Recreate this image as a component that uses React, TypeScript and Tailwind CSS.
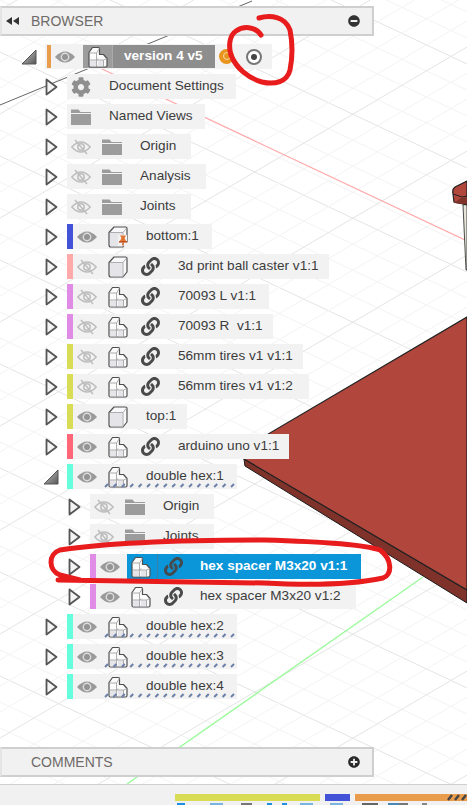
import { FaCog, FaLink, FaMinusCircle, FaPlusCircle } from "react-icons/fa";

type RowData = {
  label: string;
  width: string;
  depth?: 1 | 2;
  bar?: string;
  eye?: "on" | "off";
  icon: "gear" | "folder" | "body" | "bodies" | "pinned";
  link?: boolean;
  open?: boolean;
  selected?: boolean;
  wavy?: boolean;
};

const rows: RowData[] = [
  { label: "Document Settings", width: "w-[169px]", icon: "gear" },
  { label: "Named Views", width: "w-[138px]", icon: "folder" },
  { label: "Origin", width: "w-[124px]", eye: "off", icon: "folder" },
  { label: "Analysis", width: "w-[139px]", eye: "off", icon: "folder" },
  { label: "Joints", width: "w-[124px]", eye: "off", icon: "folder" },
  { label: "bottom:1", width: "w-[145px]", bar: "bg-[#4353d8]", eye: "on", icon: "pinned" },
  { label: "3d print ball caster v1:1", width: "w-[262px]", bar: "bg-[#ffaaaa]", eye: "off", icon: "body", link: true },
  { label: "70093 L v1:1", width: "w-[202px]", bar: "bg-[#e08be6]", eye: "off", icon: "bodies", link: true },
  { label: "70093 R  v1:1", width: "w-[206px]", bar: "bg-[#e08be6]", eye: "off", icon: "bodies", link: true },
  { label: "56mm tires v1 v1:1", width: "w-[236px]", bar: "bg-[#d9dc55]", eye: "off", icon: "bodies", link: true },
  { label: "56mm tires v1 v1:2", width: "w-[242px]", bar: "bg-[#d9dc55]", eye: "off", icon: "bodies", link: true },
  { label: "top:1", width: "w-[120px]", bar: "bg-[#d9dc55]", eye: "on", icon: "body" },
  { label: "arduino uno v1:1", width: "w-[222px]", bar: "bg-[#ff6678]", eye: "on", icon: "bodies", link: true },
  { label: "double hex:1", width: "w-[170px]", bar: "bg-[#66ffdd]", eye: "on", icon: "bodies", open: true, wavy: true },
  { label: "Origin", width: "w-[124px]", depth: 2, eye: "off", icon: "folder" },
  { label: "Joints", width: "w-[124px]", depth: 2, eye: "off", icon: "folder" },
  { label: "hex spacer M3x20 v1:1", width: "w-[271px]", depth: 2, bar: "bg-[#e08be6]", eye: "on", icon: "bodies", link: true, selected: true },
  { label: "hex spacer M3x20 v1:2", width: "w-[266px]", depth: 2, bar: "bg-[#e08be6]", eye: "on", icon: "bodies", link: true },
  { label: "double hex:2", width: "w-[170px]", bar: "bg-[#66ffdd]", eye: "on", icon: "bodies", wavy: true },
  { label: "double hex:3", width: "w-[170px]", bar: "bg-[#66ffdd]", eye: "on", icon: "bodies", wavy: true },
  { label: "double hex:4", width: "w-[170px]", bar: "bg-[#66ffdd]", eye: "on", icon: "bodies", wavy: true },
];

const toolbarBits = [
  { cls: "ml-[17px] w-[8px] bg-[#1f8fe0]" },
  { cls: "ml-[25px] w-[13px] bg-[#7ab5e0]" },
  { cls: "ml-[18px] w-[11px] bg-[#777777]" },
  { cls: "ml-[15px] w-[5px] bg-[#1f8fe0]" },
  { cls: "ml-[10px] w-[5px] bg-[#1f8fe0]" },
  { cls: "ml-[13px] w-[13px] bg-[#7ab5e0]" },
  { cls: "ml-[17px] w-[13px] bg-[#7ab5e0]" },
  { cls: "ml-[19px] w-[16px] bg-[#666666]" },
  { cls: "ml-[10px] w-[11px] bg-[#4a88b8]" },
  { cls: "w-[9px] bg-[#777777]" },
  { cls: "ml-[14px] w-[5px] bg-[#888888]" },
];

function Viewport() {
  const descending = Array.from({ length: 40 }, (_, i) => i * 26 - 260);
  const rising = Array.from({ length: 50 }, (_, i) => i * 26 + 10);
  return (
    <svg className="absolute inset-0" width="467" height="805" viewBox="0 0 467 805">
      {descending.map((c, i) => (
        <line key={c} x1="0" y1={c} x2="467" y2={c + 220} stroke={i % 4 === 0 ? "#e4e4e4" : "#f3f3f3"} strokeWidth="1" />
      ))}
      {rising.map((c, i) => (
        <line key={c} x1="0" y1={c} x2="467" y2={c - 275} stroke={i % 4 === 0 ? "#e4e4e4" : "#f3f3f3"} strokeWidth="1" />
      ))}
      <line x1="0" y1="105" x2="252" y2="1" stroke="#666666" strokeWidth="1" />
      <line x1="100" y1="68" x2="467" y2="241" stroke="#ffaaaa" strokeWidth="1.2" />
      <line x1="127" y1="784" x2="423" y2="577" stroke="#9cfb9c" strokeWidth="1.4" />
      {/* red plate */}
      <polygon points="244,459 245,466 467,603 467,590" fill="#7e322a" stroke="#1a1a1a" strokeWidth="1" />
      <polygon points="236,453 467,317 467,590 244,459" fill="#b0463c" stroke="#222222" strokeWidth="1.2" />
      {/* far plate and its leg */}
      <polygon points="463,205 467,204 467,270 466,270" fill="#e4e4d8" stroke="#222222" strokeWidth="0.8" />
      <path d="M467 181 L455 187 Q452 189 453 194 L454 202 L467 205 Z" fill="#b0463c" stroke="#222222" strokeWidth="1.2" />
      <path d="M453 194 L462 197 L467 196" fill="none" stroke="#222222" strokeWidth="1" />
      <polygon points="454,203 461,198 467,197 467,204 462,204" fill="#7e322a" />
    </svg>
  );
}

function Annotations() {
  return (
    <svg className="pointer-events-none absolute inset-0" width="467" height="805" viewBox="0 0 467 805">
      <g fill="none" stroke="#e81c1c" strokeWidth="5" strokeLinecap="round">
        <path d="M259 18 C270 15 285 16 290 30 C293 45 292 60 290 70 C287 82 275 85 262 82 C248 78 236 68 231 55 C228 45 230 35 236 31 C243 26 255 26 261 35" />
        <path d="M58 580 C100 581 180 582 264 583 C300 585 350 585 383 578 C392 575 393 560 380 550 C360 543 300 541 264 540 C200 540 120 541 60 550 C48 554 48 570 60 575 L80 580" />
      </g>
    </svg>
  );
}

function Collapsed() {
  return (
    <svg width="13" height="18" viewBox="0 0 13 18">
      <path d="M1.5 1.5 L11.5 9 L1.5 16.5 Z" fill="#f4f4f4" stroke="#555555" strokeWidth="1.8" strokeLinejoin="round" />
    </svg>
  );
}

function Expanded() {
  return (
    <svg width="16" height="16" viewBox="0 0 16 16">
      <defs>
        <linearGradient id="tri" x1="0" y1="0" x2="1" y2="1">
          <stop offset="0" stopColor="#cccccc" />
          <stop offset="1" stopColor="#555555" />
        </linearGradient>
      </defs>
      <path d="M1 15 L15 1 V15 Z" fill="url(#tri)" stroke="#555555" strokeWidth="1" strokeLinejoin="round" />
    </svg>
  );
}

function Eye({ off }: { off?: boolean }) {
  if (off) {
    return (
      <svg width="20" height="16" viewBox="0 0 20 16">
        <g fill="none" stroke="#bdbdbd" strokeWidth="1.5">
          <path d="M0.8 8 Q10 -2 19.2 8 Q10 18 0.8 8 Z" />
          <circle cx="10" cy="8" r="3.2" />
          <line x1="4" y1="1" x2="16" y2="15" />
        </g>
      </svg>
    );
  }
  return (
    <svg width="20" height="14" viewBox="0 0 20 14">
      <path d="M0 7 Q10 -4 20 7 Q10 18 0 7 Z" fill="#9a9a9a" />
      <circle cx="10" cy="7" r="4.4" fill="#dddddd" />
      <circle cx="10" cy="7" r="3" fill="#949494" />
    </svg>
  );
}

function Folder() {
  return (
    <svg width="20" height="16" viewBox="0 0 20 16">
      <path d="M0 0.5 H7.5 L9.5 3 H20 V4 H0 Z" fill="#9c9c9c" />
      <rect x="0" y="5" width="20" height="11" fill="#9c9c9c" />
    </svg>
  );
}

function Bodies() {
  return (
    <svg width="20" height="22" viewBox="0 0 20 22">
      <path d="M1 19.5 V6.5 L4.5 1.5 H10.5 Q11.5 1.5 11.5 2.5 V8.5 H15.5 L19 12.5 V19.5 Q19 21 17.5 21 H2.5 Q1 21 1 19.5 Z" fill="#fbfbfc" stroke="#505050" strokeWidth="1.2" strokeLinejoin="round" />
      <path d="M2 14.5 H8.5 V20.3 H2 Z M10 14.5 H15.5 V20.3 H10 Z" fill="#e6e6ea" />
      <path d="M1.5 7 H8.5 L11.5 2.5 M8.5 7 V21 M1.5 14 H8.5 M10 12.5 L9 14 H15.5 L19 12.5 M15.5 14 V21" fill="none" stroke="#9a9a9a" strokeWidth="0.8" />
    </svg>
  );
}

function Body({ pin }: { pin?: boolean }) {
  return (
    <svg width="20" height="22" viewBox="0 0 20 22">
      <path d="M1 19 V6.5 L6 1 H17.5 Q19 1 19 2.5 V16 L15 21 H3 Q1 21 1 19 Z" fill="#f8f8fa" stroke="#505050" strokeWidth="1.2" strokeLinejoin="round" />
      <path d="M2 7 H14.5 V20.3 H3 Q2 20.3 2 19 Z" fill="#e4e4e9" />
      <path d="M1.5 6.5 H15 L19 1.5 M15 6.5 V21" fill="none" stroke="#9a9a9a" strokeWidth="0.8" />
      {pin && (
        <g>
          <rect x="10" y="9" width="9" height="11" fill="#f2f2f2" />
          <path d="M12 9.5 H18 L16.5 12 L18 15 H12 L13.5 12 Z" fill="#e2732c" />
          <rect x="11" y="15" width="8" height="1.6" fill="#c4501c" />
          <rect x="14.3" y="16.5" width="1.4" height="3" fill="#c4501c" />
        </g>
      )}
    </svg>
  );
}

function Wavy() {
  const dashes = Array.from({ length: 16 }, (_, i) => i * 8.4 + 1);
  return (
    <svg className="absolute bottom-[1px] right-0" width="133" height="6" viewBox="0 0 133 6">
      {dashes.map((x) => (
        <line key={x} x1={x} y1="5" x2={x + 3} y2="2" stroke="#6b7fa8" strokeWidth="2" />
      ))}
    </svg>
  );
}

function TreeRow({ row }: { row: RowData }) {
  const { depth = 1, selected } = row;
  const sideClass =
    depth === 2 ? "w-[90px] pl-[68px]" : row.open ? "w-[67px] pl-[43px]" : "w-[67px] pl-[45px]";

  const glyph =
    row.icon === "gear" ? (
      <FaCog className="text-[#8f8f8f]" size={20} />
    ) : row.icon === "folder" ? (
      <Folder />
    ) : row.icon === "body" ? (
      <Body />
    ) : row.icon === "pinned" ? (
      <Body pin />
    ) : (
      <Bodies />
    );

  return (
    <div className="flex h-[25px] items-center">
      <div className={`flex h-full items-center ${sideClass}`}>{row.open ? <Expanded /> : <Collapsed />}</div>
      <div className={`relative flex h-full items-center bg-[#f2f2f2] ${row.width}`}>
        {row.bar && <div className={`h-full w-[6px] shrink-0 ${row.bar}`} />}
        {row.eye && (
          <div className="flex w-[24px] shrink-0 justify-end">
            <Eye off={row.eye === "off"} />
          </div>
        )}
        <div
          className={
            selected
              ? "ml-[7px] flex h-full flex-1 items-center bg-[#0a96d8] pl-[4px] text-white"
              : row.eye
                ? "ml-[7px] flex h-full flex-1 items-center pl-[4px] text-[#3c3c3c]"
                : "flex h-full flex-1 items-center pl-[4px] text-[#3c3c3c]"
          }
        >
          <div className="flex w-[20px] shrink-0 justify-center">{glyph}</div>
          {row.link && (
            <div
              className={
                selected
                  ? "ml-[6px] flex h-full w-[26px] shrink-0 items-center justify-end border-l border-[#3a7fa8] text-[#454a4e]"
                  : "ml-[6px] flex h-full w-[26px] shrink-0 items-center justify-end text-[#4a4a4a]"
              }
            >
              <FaLink size={19} />
            </div>
          )}
          <span
            className={
              selected
                ? "ml-[17px] whitespace-pre text-[13.6px] font-bold"
                : depth === 2 && row.link
                  ? "ml-[17px] whitespace-pre text-[13.6px]"
                  : "ml-[18px] whitespace-pre text-[13.6px]"
            }
          >
            {row.label}
          </span>
        </div>
        {row.wavy && <Wavy />}
      </div>
    </div>
  );
}

function PanelBar({ title, children }: { title: string; children: React.ReactNode }) {
  return (
    <div className="flex h-[30px] w-[374px] shrink-0 items-center border-2 border-[#cfcfcf] border-l-[#e4e4e4] bg-[#f1f1f1] pr-[3px]">
      {children}
      <span className="text-[14px] text-[#6e6a68]">{title}</span>
    </div>
  );
}

export default function App() {
  return (
    <div className="relative flex h-[805px] w-[467px] flex-col overflow-hidden bg-white font-['Liberation_Sans',Arial,sans-serif]">
      <Viewport />

      <div className="relative mt-[6px] flex flex-1 flex-col">
        <PanelBar title="BROWSER">
          <svg className="ml-[4px] mr-[12px]" width="13" height="8" viewBox="0 0 13 8">
            <path d="M0 4 L6 0 V8 Z M7 4 L13 0 V8 Z" fill="#333333" />
          </svg>
          <div className="order-last ml-auto mr-[9px] text-[#333333]">
            <FaMinusCircle size={12} />
          </div>
        </PanelBar>

        <div className="flex flex-1 flex-col gap-[5px] pt-[8px]">
          <div className="flex h-[25px] items-center">
            <div className="flex h-full w-[45px] items-center pl-[21px]">
              <Expanded />
            </div>
            <div className="flex h-full w-[227px] items-center bg-[#f2f2f2]">
              <div className="ml-[2px] h-[23px] w-[4px] bg-[#e89c4c]" />
              <div className="ml-[4px] flex w-[20px] justify-center">
                <Eye />
              </div>
              <div className="ml-[8px] flex h-[23px] w-[132px] items-center bg-[#8e8e8e]">
                <div className="flex h-full w-[30px] items-center justify-center border-r border-[#aaaaaa] bg-[#9c9c9c]">
                  <Bodies />
                </div>
                <span className="ml-[11px] text-[13.6px] font-bold text-white">version 4 v5</span>
              </div>
              <div className="ml-[4px] h-[15px] w-[15px] rounded-full bg-[#e8941e] pl-[4px] pt-[3px]">
                <div className="h-[8px] w-[8px] rounded-full border border-[#f6d6a0]" />
              </div>
              <div className="ml-[12px] flex h-[16px] w-[16px] items-center justify-center rounded-full border-2 border-[#777777] bg-white">
                <div className="h-[6px] w-[6px] rounded-full bg-[#444444]" />
              </div>
            </div>
          </div>
          {rows.map((row, i) => (
            <TreeRow key={i} row={row} />
          ))}
        </div>

        <PanelBar title="COMMENTS">
          <div className="w-[29px]" />
          <div className="order-last ml-auto mr-[9px] text-[#2a2a2a]">
            <FaPlusCircle size={12} />
          </div>
        </PanelBar>

        <div className="mt-[7px] h-[21px] shrink-0 border-t border-[#d0d0d0] bg-[#f1f1f1] pt-[9px]">
          <div className="flex h-[7px] pl-[175px]">
            <div className="w-[145px] bg-[#d9dc55]" />
            <div className="ml-[5px] w-[25px] bg-[#4353d8]" />
            <div className="relative ml-[5px] flex-1 bg-[#e89c4c]">
              <svg className="absolute right-0 top-0" width="20" height="7" viewBox="0 0 20 7">
                <path d="M1 6 L5 1 M8 6 L12 1 M15 6 L19 1" stroke="#444444" strokeWidth="2.4" />
              </svg>
            </div>
          </div>
          <div className="mt-[2px] flex h-[2px] pl-[160px]">
            {toolbarBits.map((bit, i) => (
              <div key={i} className={bit.cls} />
            ))}
          </div>
        </div>
      </div>

      <Annotations />
    </div>
  );
}
